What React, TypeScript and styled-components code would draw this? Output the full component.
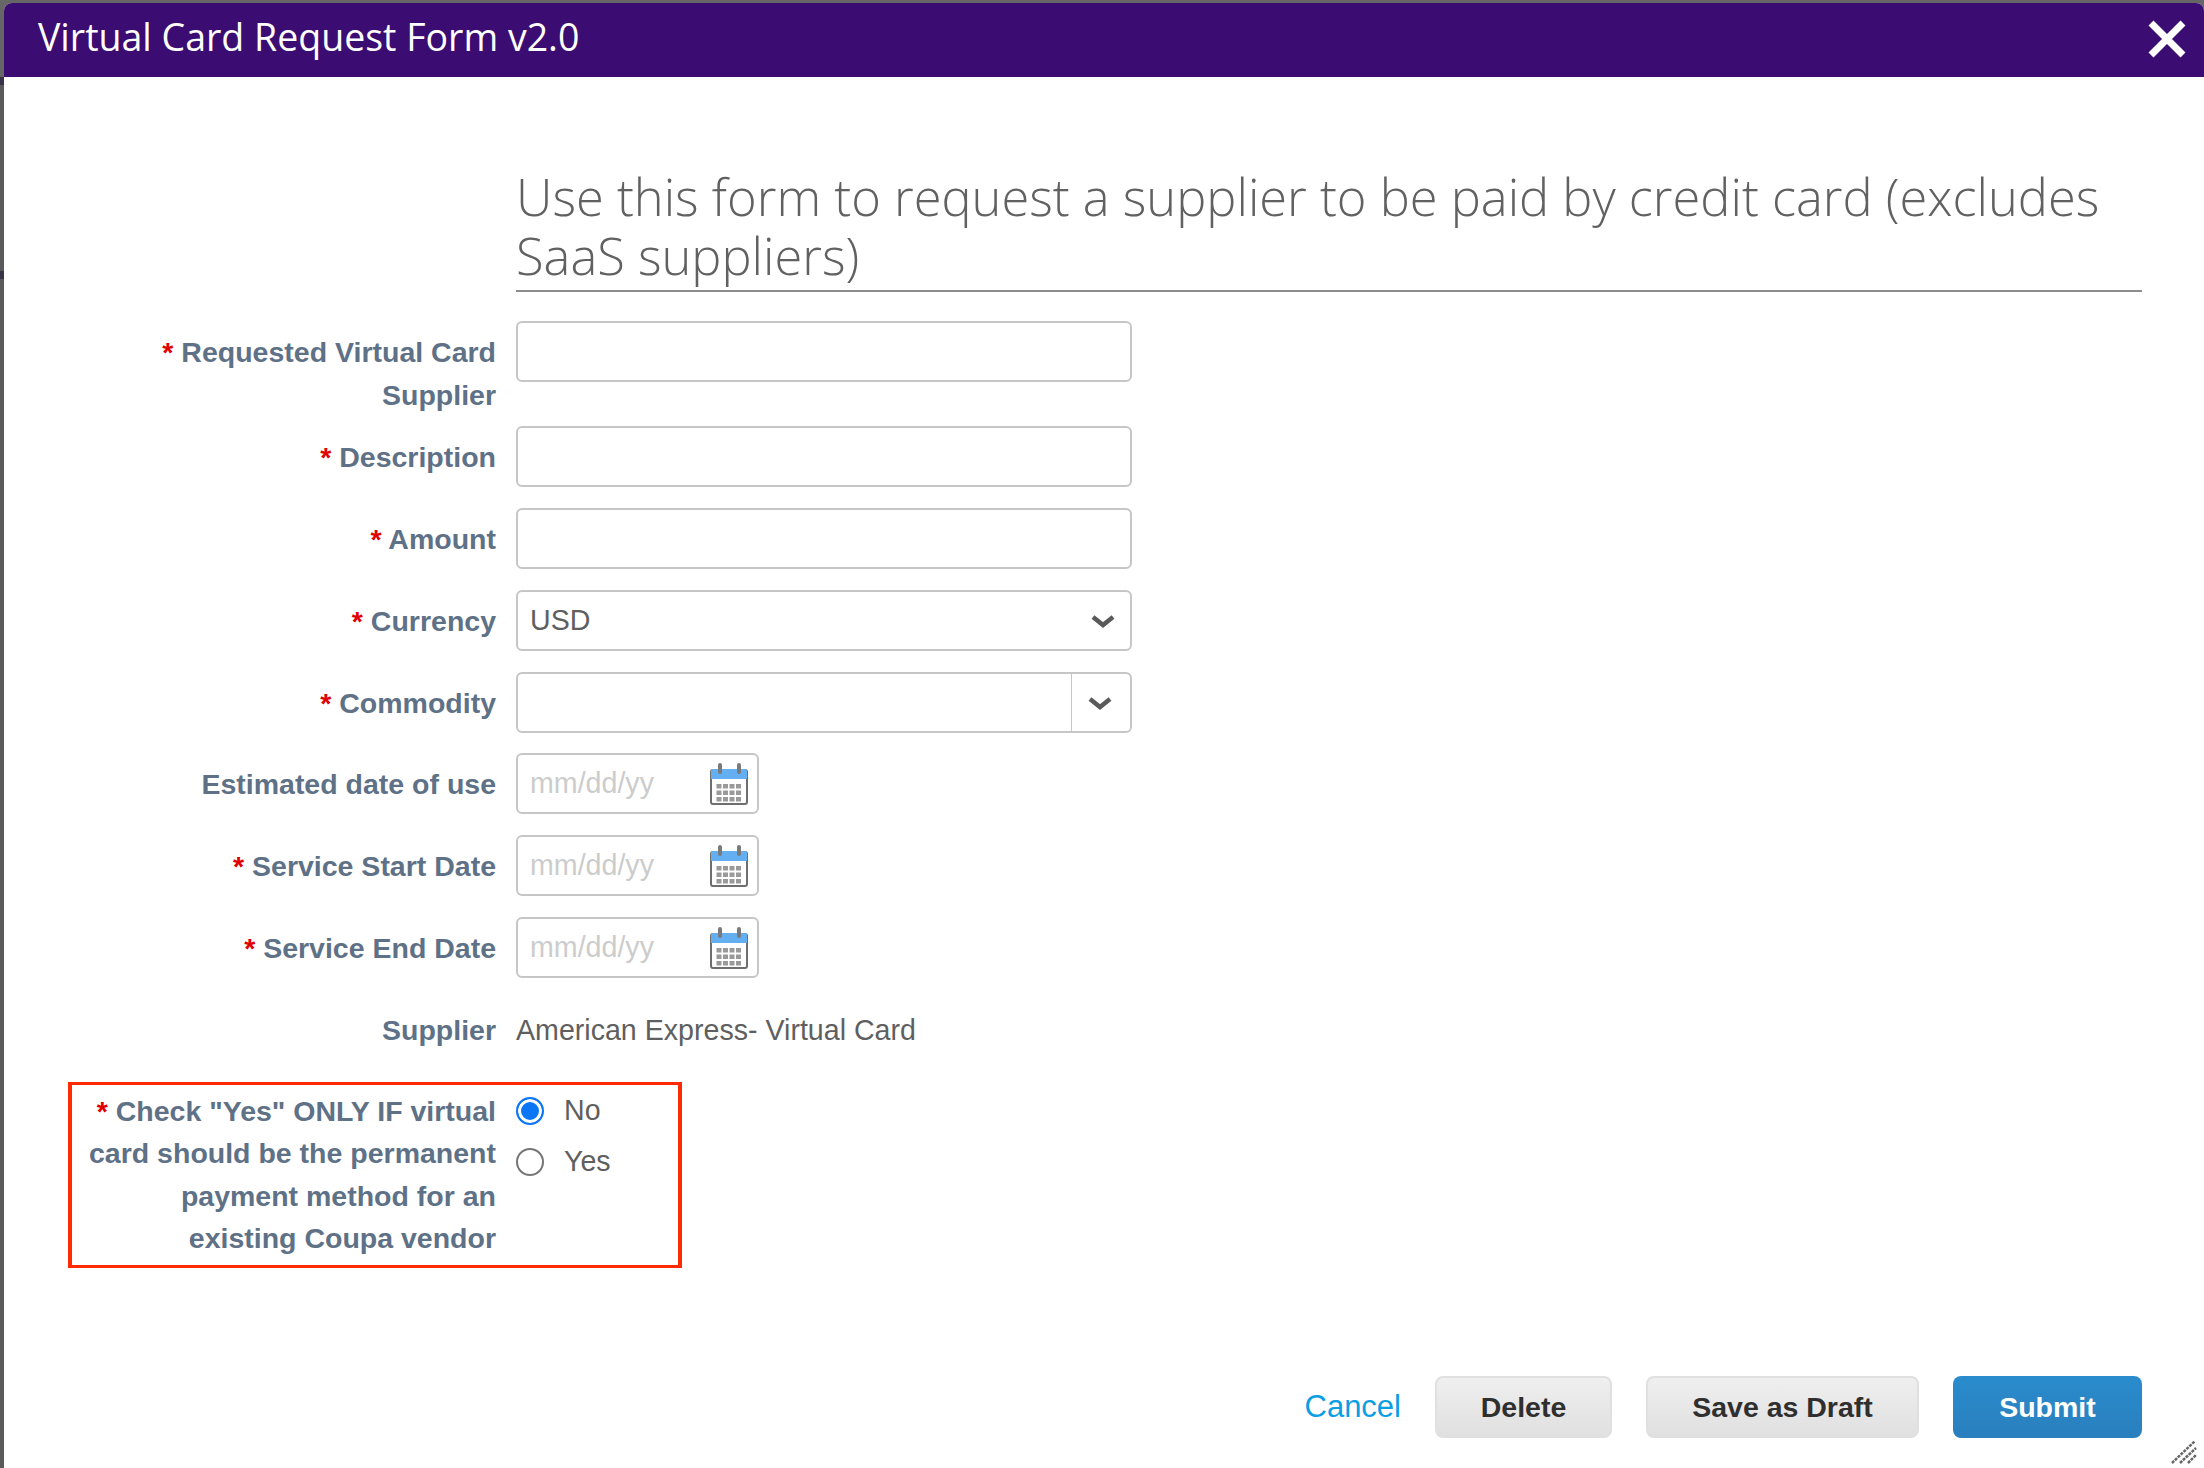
import React from "react";
import styled, { createGlobalStyle } from "styled-components";

const GlobalStyle = createGlobalStyle`
  html, body {
    margin: 0;
    padding: 0;
    background: #666666;
  }
  * {
    box-sizing: border-box;
  }
`;

const Backdrop = styled.div`
  width: 2204px;
  height: 1468px;
  padding: 3px 0 0 4px;
  background: linear-gradient(
    to bottom,
    #666666 77px,
    #3a3348 77px 85px,
    #5a5a5a 85px 271px,
    #3a3348 271px 279px,
    #5a5a5a 279px
  );
  overflow: hidden;
`;

const Dialog = styled.div`
  position: relative;
  height: 1465px;
  display: flex;
  flex-direction: column;
  background: #ffffff;
  border-radius: 8px 8px 0 0;
  overflow: hidden;
`;

const Header = styled.div`
  flex: none;
  height: 74px;
  padding: 0 18px 0 34px;
  display: flex;
  align-items: center;
  justify-content: space-between;
  background: #3b0d72;
  color: #ffffff;
  font: 400 37.5px "Open Sans", sans-serif;
`;

const HeaderTitle = styled.span`
  padding-bottom: 8px;
`;

const CloseIcon = styled.svg`
  width: 38px;
  height: 38px;
  margin-bottom: 3px;
  display: block;
`;

const Form = styled.form`
  flex: 1;
  padding: 90px 62px 0 0;
  display: flex;
  flex-direction: column;
`;

const Row = styled.div<{ $gap: number }>`
  position: relative;
  display: grid;
  grid-template-columns: 492px 1fr;
  column-gap: 20px;
  margin-bottom: ${({ $gap }) => $gap}px;
`;

const Title = styled.h1`
  grid-column: 2;
  margin: 0;
  padding-bottom: 5px;
  border-bottom: 2px solid #8c8c8c;
  color: #616161;
  font: 300 50.6px/59px "Open Sans", sans-serif;
`;

const Label = styled.label`
  padding: 10px 0 0 78px;
  text-align: right;
  color: #5e7186;
  font: 700 28.5px/42.5px "Liberation Sans", sans-serif;
`;

const Star = styled.span`
  color: #e00000;
`;

const Field = styled.div<{ $width: number }>`
  width: ${({ $width }) => $width}px;
  height: 61px;
  display: flex;
  align-items: center;
  justify-content: space-between;
  border: 2px solid #c6c6c6;
  border-radius: 6px;
  background: #ffffff;
`;

const FieldText = styled.span<{ $muted?: boolean }>`
  padding-left: 12px;
  color: ${({ $muted }) => ($muted ? "#cccccc" : "#5f5f5f")};
  font: 400 28.6px "Liberation Sans", sans-serif;
`;

const ChevronBox = styled.div<{ $split?: boolean }>`
  flex: none;
  width: ${({ $split }) => ($split ? "59px" : "44px")};
  height: 100%;
  padding-right: ${({ $split }) => ($split ? "2px" : "10px")};
  display: flex;
  align-items: center;
  justify-content: center;
  border-left: ${({ $split }) => ($split ? "1px solid #c6c6c6" : "none")};
`;

const Chevron = styled.svg`
  width: 24px;
  height: 14px;
  display: block;
`;

const Calendar = styled.svg`
  width: 38px;
  height: 42px;
  margin-right: 9px;
  display: block;
`;

const StaticValue = styled.div`
  padding-top: 10px;
  color: #5f5f5f;
  font: 400 28.6px/42px "Liberation Sans", sans-serif;
`;

const RadioGroup = styled.div`
  padding-top: 13px;
  display: flex;
  flex-direction: column;
  gap: 15px;
`;

const RadioRow = styled.div`
  height: 36px;
  display: flex;
  align-items: center;
  gap: 20px;
  color: #5f5f5f;
  font: 400 28.6px "Liberation Sans", sans-serif;
`;

const Radio = styled.span<{ $checked?: boolean }>`
  width: 28px;
  height: 28px;
  border-radius: 50%;
  background: ${({ $checked }) => ($checked ? "#0a76f6" : "#ffffff")};
  border: 2px solid ${({ $checked }) => ($checked ? "#0a76f6" : "#767676")};
  box-shadow: ${({ $checked }) => ($checked ? "inset 0 0 0 3px #ffffff" : "none")};
`;

// the red annotation box drawn over the screenshot
const Highlight = styled.div`
  position: absolute;
  left: 64px;
  top: 2px;
  width: 614px;
  height: 186px;
  border: 3px solid #ff2a00;
  border-width: 3px 4px;
  pointer-events: none;
`;

const Footer = styled.div`
  position: absolute;
  right: 62px;
  bottom: 30px;
  display: flex;
  align-items: center;
  gap: 34px;
`;

const CancelLink = styled.a`
  color: #0b9ee3;
  font: 400 31px "Liberation Sans", sans-serif;
`;

const Button = styled.button<{ $primary?: boolean; $width: number }>`
  width: ${({ $width }) => $width}px;
  height: 62px;
  border-radius: 8px;
  border: ${({ $primary }) => ($primary ? "none" : "2px solid #e0e0e0")};
  background: ${({ $primary }) =>
    $primary ? "linear-gradient(#2a8ccd, #2a7fbd)" : "linear-gradient(#efefef, #e0e0e0)"};
  color: ${({ $primary }) => ($primary ? "#ffffff" : "#2f2f2f")};
  font: 700 28.5px "Liberation Sans", sans-serif;
`;

const ResizeGrip = styled.svg`
  position: absolute;
  right: 7px;
  bottom: 4px;
  width: 26px;
  height: 24px;
  display: block;
`;

function ChevronDown() {
  return (
    <Chevron viewBox="0 0 24 14">
      <path d="M2 3 L12 11 L22 3" fill="none" stroke="#5a5a5a" strokeWidth="4.5" />
    </Chevron>
  );
}

function CalendarIcon() {
  return (
    <Calendar viewBox="0 0 38 42">
      <rect x="1" y="7" width="36" height="34" rx="2" fill="#ffffff" stroke="#6e6e6e" strokeWidth="2" />
      <path d="M1 8 Q1 6 3 6 H35 Q37 6 37 8 V16 H1 Z" fill="#64aef2" />
      <rect x="8" y="0" width="4" height="11" rx="2" fill="#7a7a7a" />
      <rect x="27" y="0" width="4" height="11" rx="2" fill="#7a7a7a" />
      {[21, 27.5, 34].map((y) =>
        [6.5, 13, 19.5, 26].map((x) => (
          <rect key={`${x}-${y}`} x={x} y={y} width="5" height="4.5" fill="#9a9a9a" />
        ))
      )}
    </Calendar>
  );
}

function DateField() {
  return (
    <Field $width={243}>
      <FieldText $muted>mm/dd/yy</FieldText>
      <CalendarIcon />
    </Field>
  );
}

export default function App() {
  return (
    <>
      <GlobalStyle />
      <Backdrop>
        <Dialog>
          <Header>
            <HeaderTitle>Virtual Card Request Form v2.0</HeaderTitle>
            <CloseIcon viewBox="0 0 38 38">
              <path d="M3 3 L35 35 M35 3 L3 35" stroke="#ffffff" strokeWidth="7" />
            </CloseIcon>
          </Header>
          <Form>
            <Row $gap={29}>
              <div />
              <Title>Use this form to request a supplier to be paid by credit card (excludes SaaS suppliers)</Title>
            </Row>
            <Row $gap={10}>
              <Label>
                <Star>*</Star> Requested Virtual Card Supplier
              </Label>
              <Field $width={616} />
            </Row>
            <Row $gap={21}>
              <Label>
                <Star>*</Star> Description
              </Label>
              <Field $width={616} />
            </Row>
            <Row $gap={21}>
              <Label>
                <Star>*</Star> Amount
              </Label>
              <Field $width={616} />
            </Row>
            <Row $gap={21}>
              <Label>
                <Star>*</Star> Currency
              </Label>
              <Field $width={616}>
                <FieldText>USD</FieldText>
                <ChevronBox>
                  <ChevronDown />
                </ChevronBox>
              </Field>
            </Row>
            <Row $gap={20}>
              <Label>
                <Star>*</Star> Commodity
              </Label>
              <Field $width={616}>
                <span />
                <ChevronBox $split>
                  <ChevronDown />
                </ChevronBox>
              </Field>
            </Row>
            <Row $gap={21}>
              <Label>Estimated date of use</Label>
              <DateField />
            </Row>
            <Row $gap={21}>
              <Label>
                <Star>*</Star> Service Start Date
              </Label>
              <DateField />
            </Row>
            <Row $gap={21}>
              <Label>
                <Star>*</Star> Service End Date
              </Label>
              <DateField />
            </Row>
            <Row $gap={28}>
              <Label>Supplier</Label>
              <StaticValue>American Express- Virtual Card</StaticValue>
            </Row>
            <Row $gap={0}>
              <Label>
                <Star>*</Star> Check "Yes" ONLY IF virtual card should be the permanent payment method for an existing Coupa vendor
              </Label>
              <RadioGroup>
                <RadioRow>
                  <Radio $checked />
                  No
                </RadioRow>
                <RadioRow>
                  <Radio />
                  Yes
                </RadioRow>
              </RadioGroup>
              <Highlight />
            </Row>
          </Form>
          <Footer>
            <CancelLink>Cancel</CancelLink>
            <Button $width={177}>Delete</Button>
            <Button $width={273}>Save as Draft</Button>
            <Button $primary $width={189}>Submit</Button>
          </Footer>
          <ResizeGrip viewBox="0 0 26 24">
            <g stroke="#666666" strokeWidth="2.5" strokeDasharray="3 1">
              <path d="M1 23 L24 1" />
              <path d="M9 23 L25 8" />
              <path d="M17 23 L25 15" />
            </g>
          </ResizeGrip>
        </Dialog>
      </Backdrop>
    </>
  );
}
